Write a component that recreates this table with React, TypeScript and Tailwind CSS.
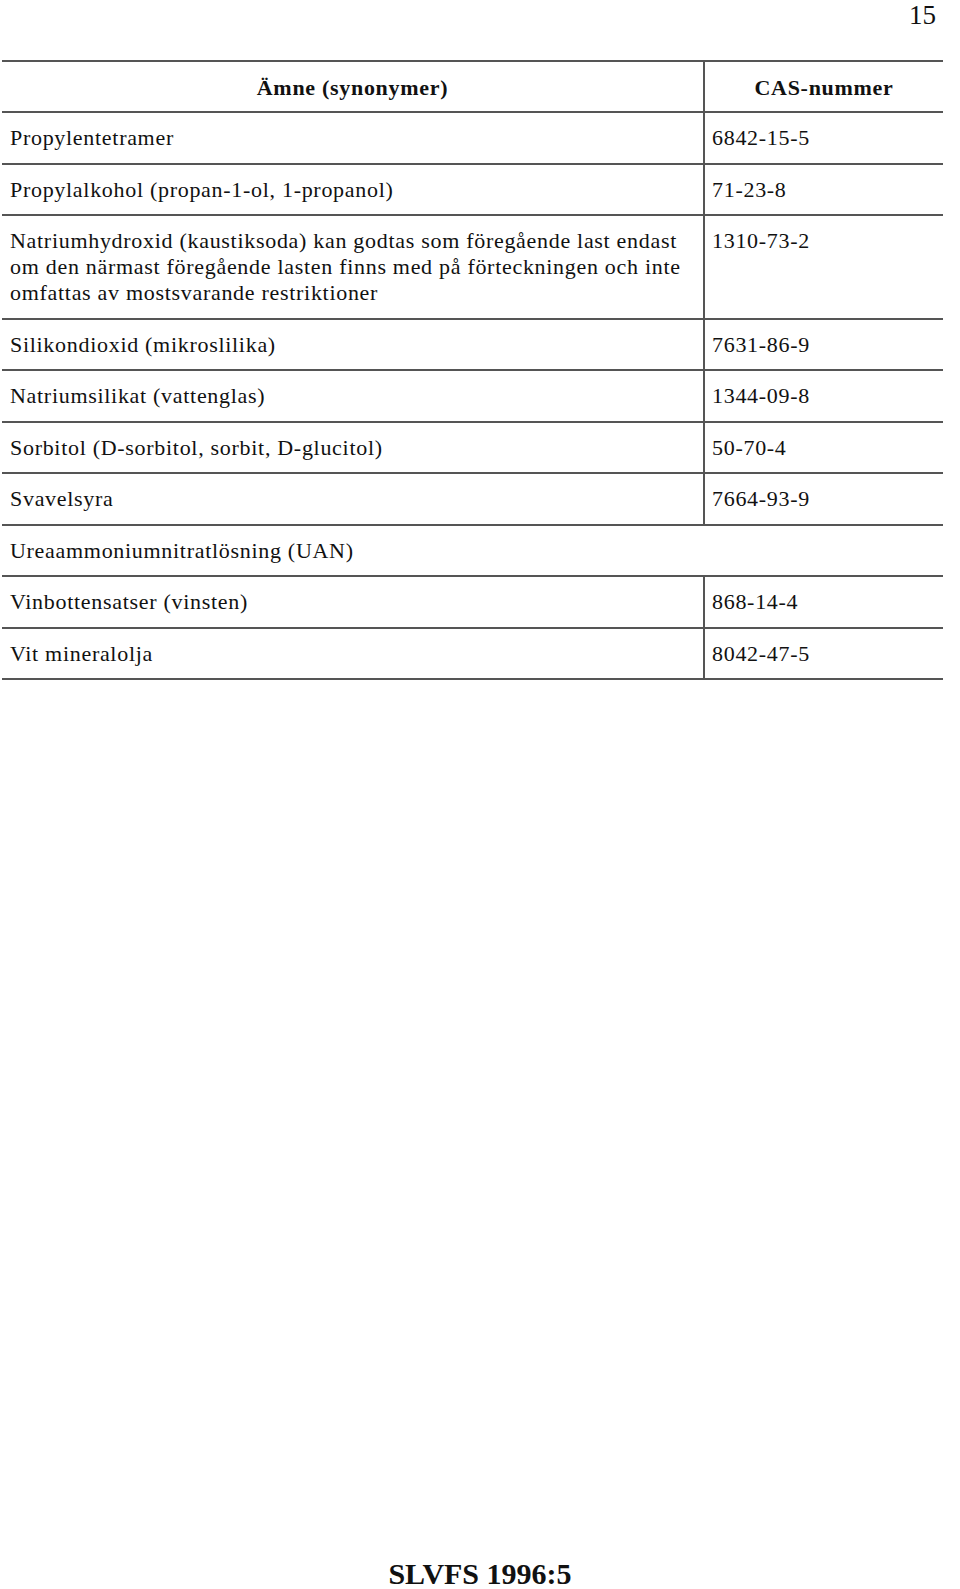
const rows: { name: React.ReactNode; cas?: string; span?: boolean }[] = [
  { name: 'Propylentetramer', cas: '6842-15-5' },
  { name: 'Propylalkohol (propan-1-ol, 1-propanol)', cas: '71-23-8' },
  {
    name: (
      <>
        Natriumhydroxid (kaustiksoda) kan godtas som föregående last endast
        <br />
        om den närmast föregående lasten finns med på förteckningen och inte
        <br />
        omfattas av mostsvarande restriktioner
      </>
    ),
    cas: '1310-73-2',
  },
  { name: 'Silikondioxid (mikroslilika)', cas: '7631-86-9' },
  { name: 'Natriumsilikat (vattenglas)', cas: '1344-09-8' },
  { name: 'Sorbitol (D-sorbitol, sorbit, D-glucitol)', cas: '50-70-4' },
  { name: 'Svavelsyra', cas: '7664-93-9' },
  { name: 'Ureaammoniumnitratlösning (UAN)', span: true },
  { name: 'Vinbottensatser (vinsten)', cas: '868-14-4' },
  { name: 'Vit mineralolja', cas: '8042-47-5' },
];

export default function App() {
  return (
    <div className="flex h-[1589px] w-[960px] flex-col overflow-hidden bg-white text-[#111] [font-family:'Liberation_Serif',serif]">
      <div className="flex justify-end pr-[24px] text-[27px] leading-[30px]">15</div>

      <div className="ml-[2px] mt-[30px] w-[941px] border-t-2 border-[#555]">
        <div className="grid h-[51px] grid-cols-[703px_1fr] border-b-2 border-[#555] text-[22px] font-bold tracking-[0.7px]">
          <div className="flex items-center justify-center border-r-2 border-[#555] pt-[2px]">Ämne (synonymer)</div>
          <div className="flex items-center justify-center pt-[2px]">CAS-nummer</div>
        </div>
        {rows.map((r, i) =>
          r.span ? (
            <div key={i} className="border-b-2 border-[#555] px-[8px] pb-[11.5px] pt-[12px] text-[22px] leading-[26px] tracking-[0.7px]">
              {r.name}
            </div>
          ) : (
            <div key={i} className="grid grid-cols-[703px_1fr] border-b-2 border-[#555] text-[22px] leading-[26px] tracking-[0.7px]">
              <div className="border-r-2 border-[#555] px-[8px] pb-[11.5px] pt-[12px]">{r.name}</div>
              <div className="px-[7px] pb-[11.5px] pt-[12px]">{r.cas}</div>
            </div>
          ),
        )}
      </div>

      <div className="mt-auto text-center text-[30px] font-bold leading-[30px]">SLVFS 1996:5</div>
    </div>
  );
}
